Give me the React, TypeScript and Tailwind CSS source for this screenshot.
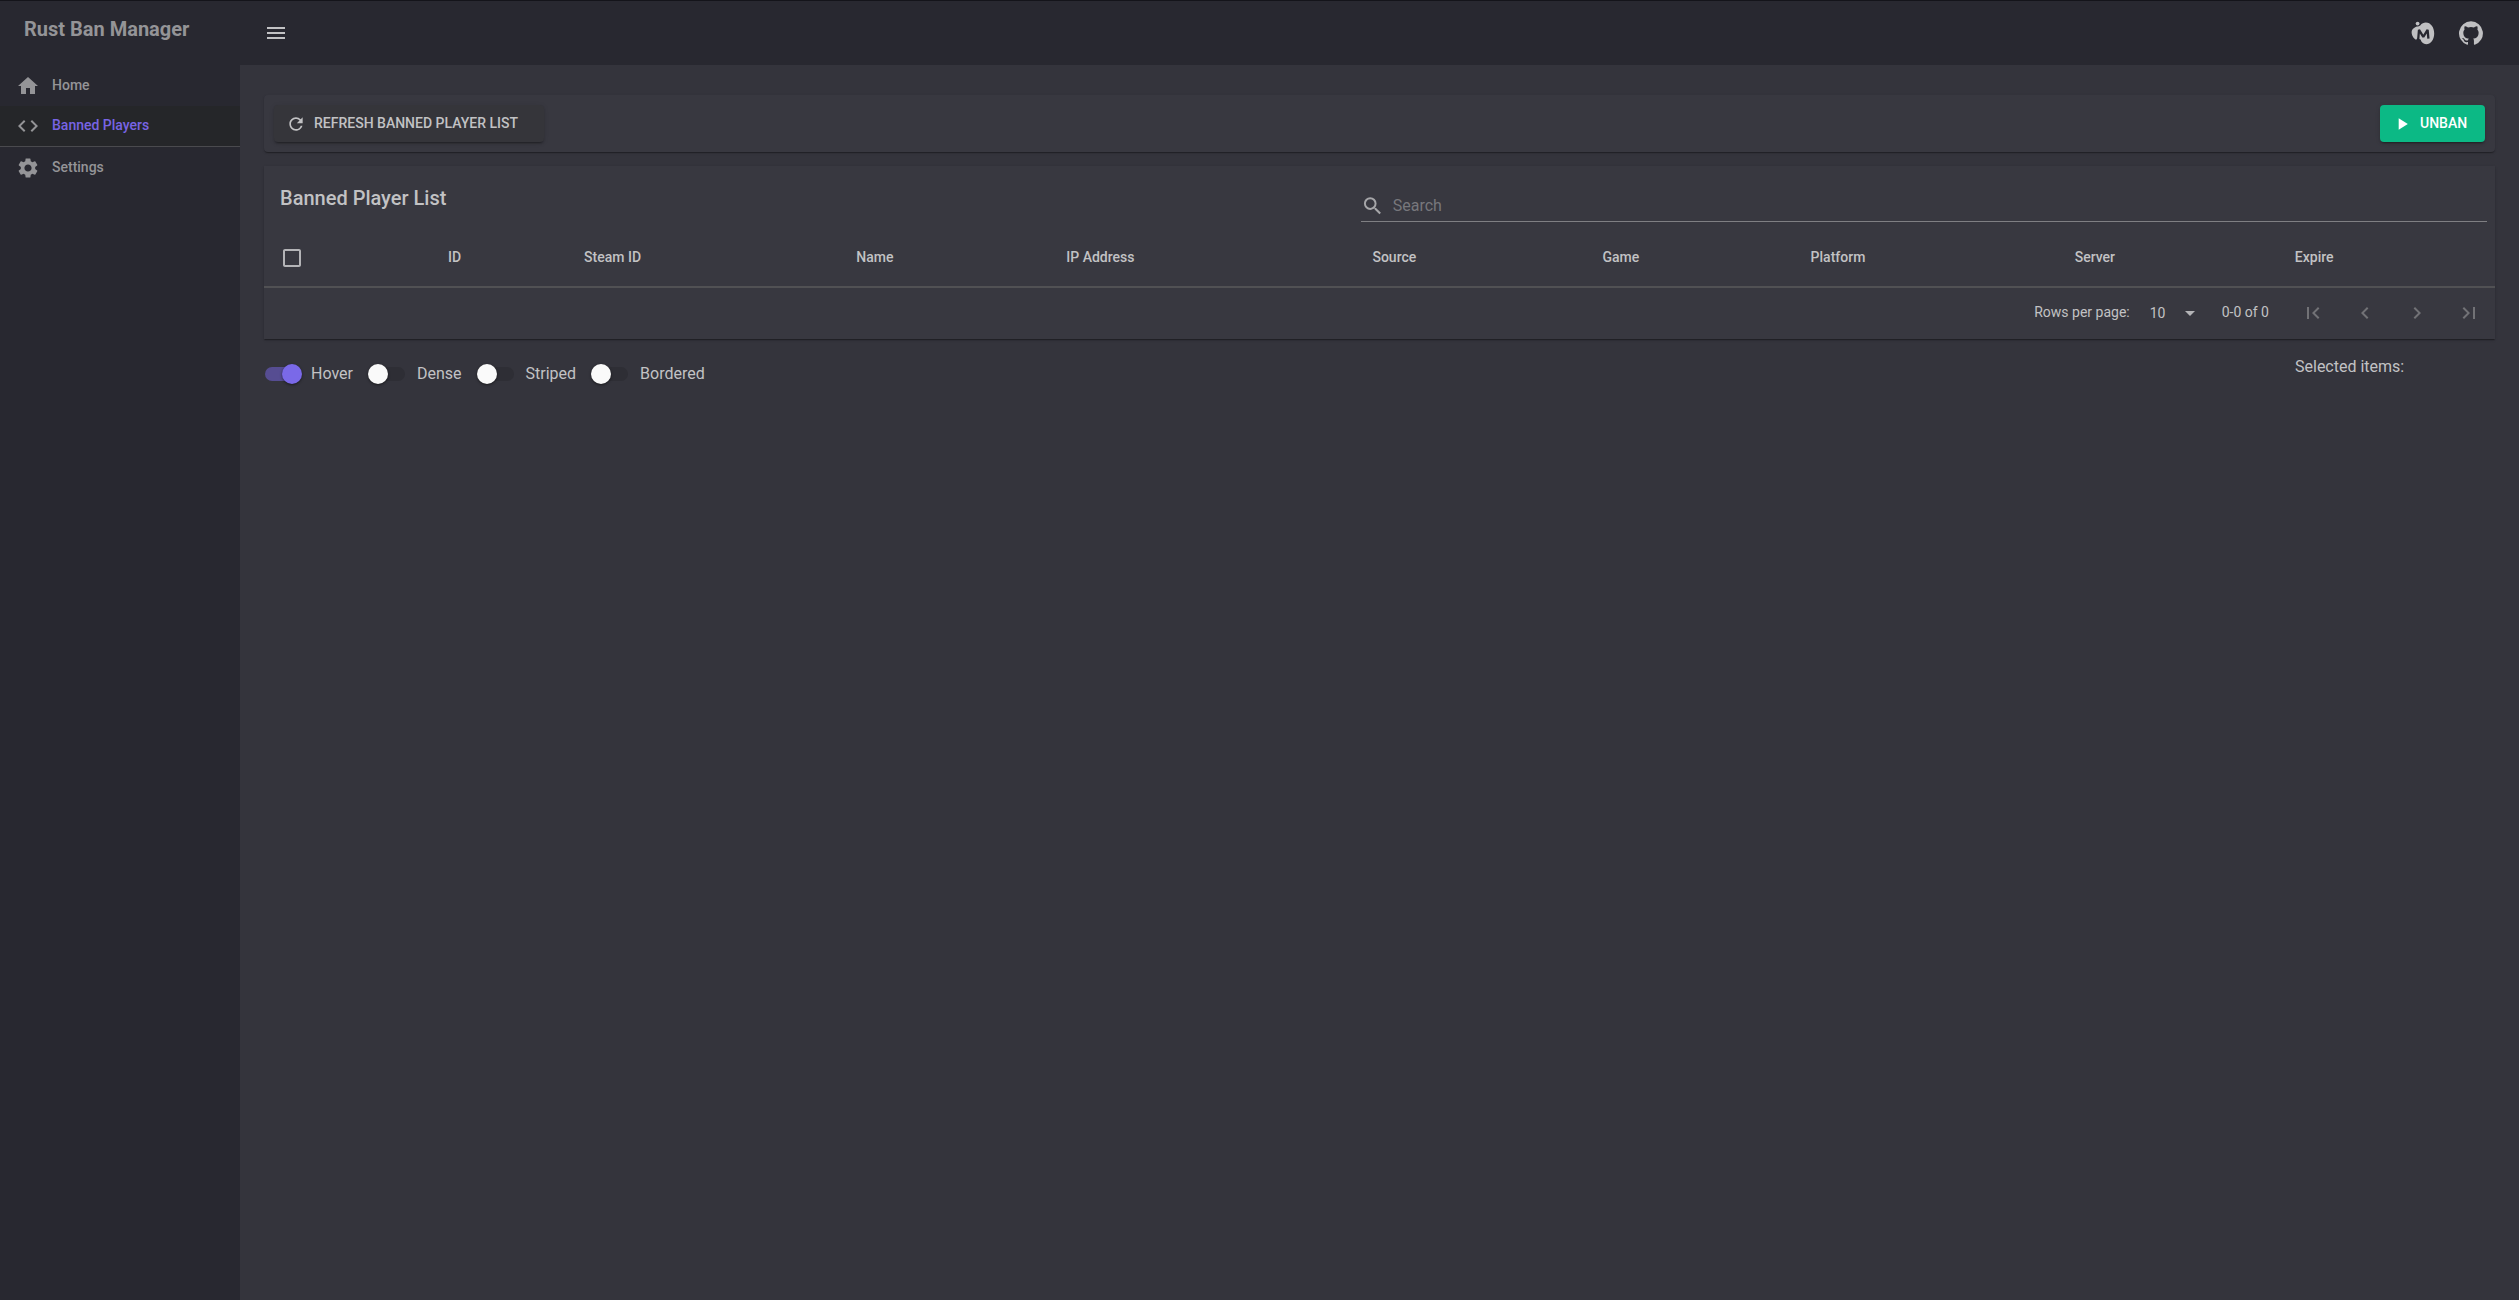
import React, { useState } from "react";
import {
  MdArrowDropDown,
  MdCheckBoxOutlineBlank,
  MdChevronLeft,
  MdChevronRight,
  MdCode,
  MdFirstPage,
  MdHome,
  MdLastPage,
  MdMenu,
  MdPlayArrow,
  MdRefresh,
  MdSearch,
  MdSettings,
} from "react-icons/md";

const columns = [
  { label: "ID", width: "w-[68px]" },
  { label: "Steam ID", width: "w-[136px]" },
  { label: "Name", width: "w-[105px]" },
  { label: "IP Address", width: "w-[153px]" },
  { label: "Source", width: "w-[115px]" },
  { label: "Game", width: "w-[104px]" },
  { label: "Platform", width: "w-[132px]" },
  { label: "Server", width: "w-[110px]" },
  { label: "Expire", width: "w-[108px]" },
];

const cardShadow =
  "shadow-[0_2px_1px_-1px_rgba(0,0,0,0.2),0_1px_1px_0_rgba(0,0,0,0.14),0_1px_3px_0_rgba(0,0,0,0.12)]";
const buttonShadow =
  "shadow-[0_3px_1px_-2px_rgba(0,0,0,0.2),0_2px_2px_0_rgba(0,0,0,0.14),0_1px_5px_0_rgba(0,0,0,0.12)]";

function BrandLogo() {
  return (
    <svg viewBox="0 0 24 24" className="size-6" aria-hidden="true">
      <circle cx="6.6" cy="2.6" r="1.9" fill="#c0c0c2" />
      <path
        d="M4.6 6C6.4 5 8 5.6 9.2 4.4C10.8 2.4 12.8 1.6 14.8 1.6C19.8 1.6 23.2 6.6 23.2 12.4C23.2 18.6 19.6 23.2 15.2 23.2C12.2 23.2 10.4 21.4 9.6 18.6L6 17.2C6 18.8 4.8 18.8 3.8 18C1.6 16.2 0.6 13.6 0.6 11C0.6 8.8 2.4 7 4.6 6Z"
        fill="#c0c0c2"
      />
      <path
        d="M7.2 18.6L8 8.8L12.3 15.8L16.6 8.8L17.4 17.6"
        fill="none"
        stroke="#282830"
        strokeWidth="2.3"
        strokeLinejoin="bevel"
      />
    </svg>
  );
}

function GithubLogo() {
  return (
    <svg viewBox="0 0 24 24" className="size-6" fill="#c0c0c2" aria-hidden="true">
      <path d="M12 .3a12 12 0 0 0-3.8 23.38c.6.12.83-.26.83-.57L9 21.07c-3.34.72-4.04-1.61-4.04-1.61-.55-1.39-1.34-1.76-1.34-1.76-1.08-.74.09-.73.09-.73 1.2.09 1.83 1.24 1.83 1.24 1.08 1.83 2.81 1.3 3.5 1 .1-.78.42-1.31.76-1.61-2.67-.3-5.47-1.33-5.47-5.93 0-1.31.47-2.38 1.24-3.22-.14-.3-.54-1.52.1-3.18 0 0 1-.32 3.3 1.23a11.5 11.5 0 0 1 6 0c2.28-1.55 3.29-1.23 3.29-1.23.64 1.66.24 2.88.12 3.18a4.65 4.65 0 0 1 1.23 3.22c0 4.61-2.8 5.63-5.48 5.92.42.36.81 1.1.81 2.22l-.01 3.29c0 .31.2.69.82.57A12 12 0 0 0 12 .3" />
    </svg>
  );
}

function NavItem({ icon, label, active = false }: { icon: React.ReactNode; label: string; active?: boolean }) {
  return (
    <li className={active ? "border-b border-[#4a4a4e] bg-[#252629]" : ""}>
      <a
        href="#"
        aria-current={active ? "page" : undefined}
        className={active ? "flex h-10 items-center gap-3 px-4" : "flex h-[41px] items-center gap-3 px-4"}
      >
        <span className="text-[#949497]">{icon}</span>
        <span
          className={
            active ? "pb-0.5 text-sm font-medium text-[#7864e4]" : "pb-0.5 text-sm font-medium text-[#949497]"
          }
        >
          {label}
        </span>
      </a>
    </li>
  );
}

function Toggle({ label, initial = false }: { label: string; initial?: boolean }) {
  const [on, setOn] = useState(initial);
  return (
    <label className="flex h-10 cursor-pointer items-center gap-3">
      <span className="relative flex h-5 w-[35px] items-center pl-px">
        <input
          type="checkbox"
          checked={on}
          onChange={(e) => setOn(e.target.checked)}
          className="peer h-3.5 w-full appearance-none rounded-full bg-[#2e2e35] checked:bg-[#564d92]"
        />
        <span className="pointer-events-none absolute -left-0.5 top-0 size-5 rounded-full bg-[#fafafa] shadow-sm shadow-black/40 peer-checked:left-[18px] peer-checked:bg-[#7a69e8]" />
      </span>
      <span className="text-base">{label}</span>
    </label>
  );
}

function PageButton({ label, children }: { label: string; children: React.ReactNode }) {
  return (
    <button type="button" disabled aria-label={label} className="flex size-12 items-center justify-center text-[#727276]">
      {children}
    </button>
  );
}

export default function App() {
  return (
    <div className="flex min-h-screen border-t border-[#14141a] bg-[#34343c] font-['Roboto',sans-serif] text-[#c2c2c4]">
      <aside className="w-60 shrink-0 bg-[#282830]">
        <h1 className="flex h-16 items-start px-6 pt-3.5 text-xl font-bold leading-7 text-[#949497]">Rust Ban Manager</h1>
        <nav aria-label="Main">
          <ul>
            <NavItem icon={<MdHome size={24} />} label="Home" />
            <NavItem icon={<MdCode size={24} />} label="Banned Players" active />
            <NavItem icon={<MdSettings size={24} />} label="Settings" />
          </ul>
        </nav>
      </aside>

      <div className="min-w-0 flex-1">
        <header className="flex h-16 items-center justify-between bg-[#282830] pl-6 pr-9">
          <button type="button" aria-label="Toggle menu">
            <MdMenu size={24} />
          </button>
          <div className="flex items-center gap-6">
            <a href="#" aria-label="Website">
              <BrandLogo />
            </a>
            <a href="#" aria-label="GitHub">
              <GithubLogo />
            </a>
          </div>
        </header>

        <main className="px-6 pt-[30px]">
          <section className={`flex items-center justify-between rounded bg-[#383840] p-2.5 ${cardShadow}`}>
            <button
              type="button"
              className={`flex h-[37px] min-w-[270px] items-center gap-2 rounded bg-[#35353a] pl-3 pr-4 text-sm font-medium uppercase ${buttonShadow}`}
            >
              <MdRefresh size={20} />
              <span className="pb-0.5">Refresh Banned Player List</span>
            </button>
            <button
              type="button"
              className={`flex h-[37px] min-w-[105px] items-center gap-2 rounded bg-[#0cb985] pl-3 pr-4 text-sm font-medium uppercase text-white ${buttonShadow}`}
            >
              <MdPlayArrow size={20} />
              <span className="pb-0.5">Unban</span>
            </button>
          </section>

          <section className={`mt-3.5 bg-[#383840] ${cardShadow}`}>
            <div className="flex h-16 justify-between pl-4 pr-2">
              <h2 className="pt-4 text-xl font-medium leading-8">Banned Player List</h2>
              <label className="mt-6 flex h-8 w-[51%] items-center gap-2 border-b border-[#7f7f83]">
                <MdSearch size={24} className="text-[#a6a6a9]" />
                <input
                  type="search"
                  placeholder="Search"
                  aria-label="Search"
                  className="w-full bg-transparent text-base outline-none placeholder:text-[#77777c]"
                />
              </label>
            </div>

            <table className="w-full table-fixed border-b-2 border-[#515154]">
              <thead>
                <tr className="h-[57px]">
                  <th scope="col" className="w-[84px] pl-4 text-left">
                    <button type="button" role="checkbox" aria-checked="false" aria-label="Select all" className="block text-[#b4b4b7]">
                      <MdCheckBoxOutlineBlank size={24} />
                    </button>
                  </th>
                  {columns.map((c) => (
                    <th key={c.label} scope="col" className={`${c.width} pb-0.5 pl-4 text-left text-sm font-medium`}>
                      {c.label}
                    </th>
                  ))}
                </tr>
              </thead>
            </table>

            <div className="flex h-[51px] items-center justify-end pb-0.5 pr-0.5 text-sm">
              <label htmlFor="rows" className="pb-0.5">
                Rows per page:
              </label>
              <span className="relative mx-5 flex items-center">
                <select id="rows" defaultValue="10" className="h-8 w-[52px] appearance-none bg-transparent outline-none">
                  <option>10</option>
                  <option>25</option>
                  <option>50</option>
                </select>
                <MdArrowDropDown size={24} className="pointer-events-none absolute right-0 text-[#b4b4b7]" />
              </span>
              <span className="mr-5 pb-0.5">0-0 of 0</span>
              <div className="flex gap-1">
                <PageButton label="First page"><MdFirstPage size={24} /></PageButton>
                <PageButton label="Previous page"><MdChevronLeft size={24} /></PageButton>
                <PageButton label="Next page"><MdChevronRight size={24} /></PageButton>
                <PageButton label="Last page"><MdLastPage size={24} /></PageButton>
              </div>
            </div>
          </section>

          <div className="mt-[15px] flex justify-between">
            <div className="flex gap-[17px]">
              <Toggle label="Hover" initial />
              <Toggle label="Dense" />
              <Toggle label="Striped" />
              <Toggle label="Bordered" />
            </div>
            <p className="w-[200px] pt-px text-base">Selected items:</p>
          </div>
        </main>
      </div>
    </div>
  );
}
